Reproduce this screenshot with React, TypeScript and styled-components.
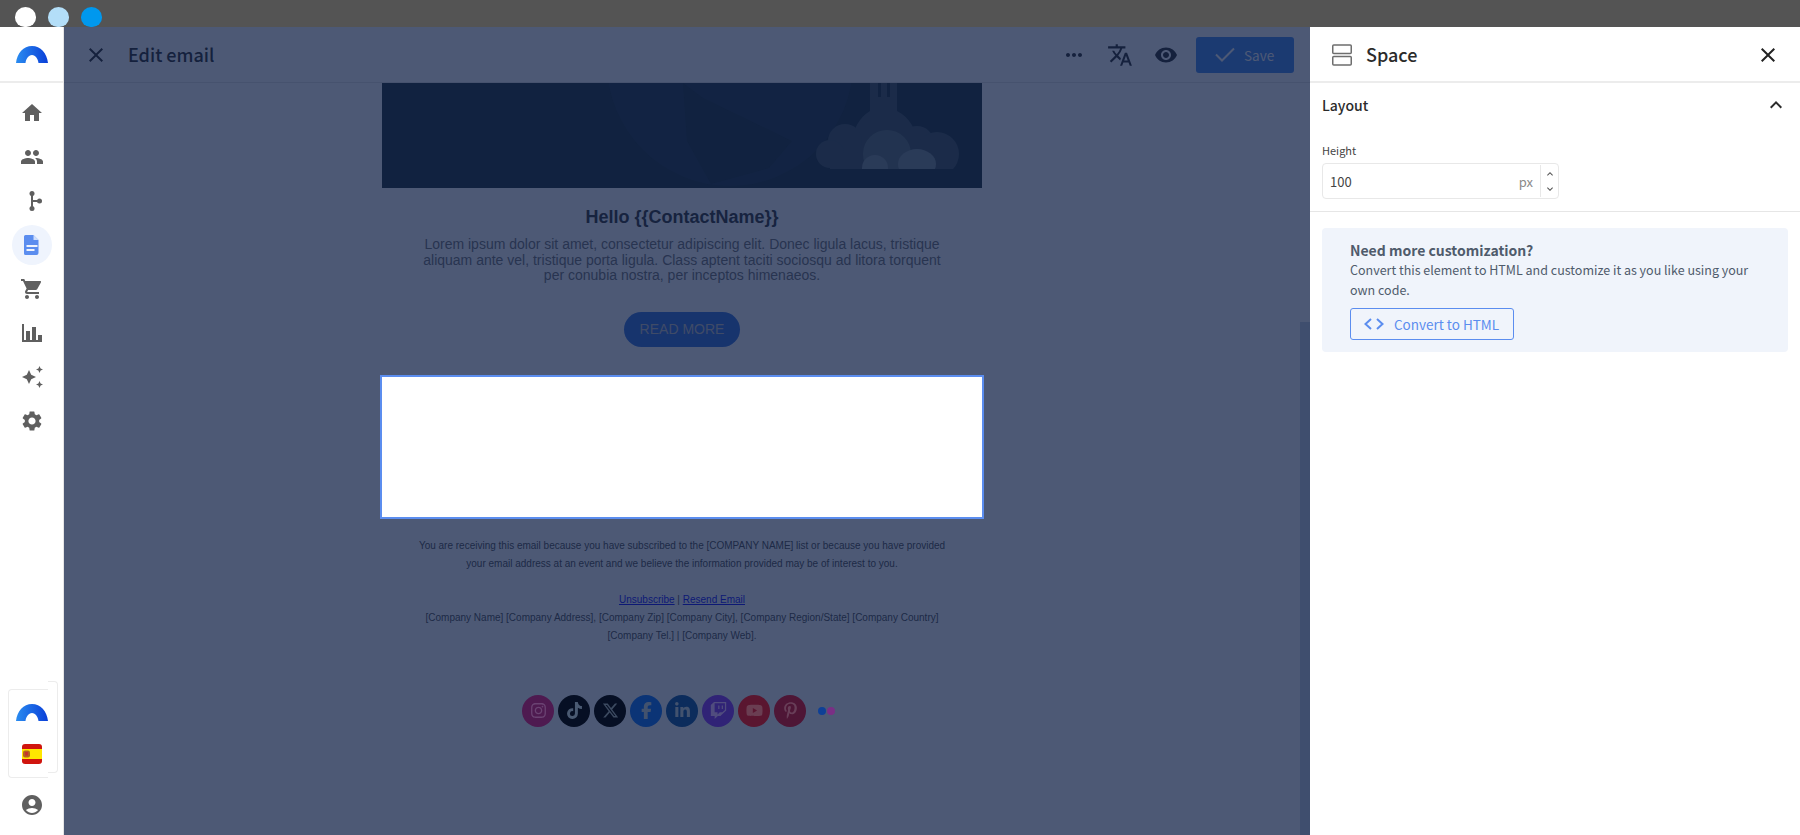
import * as React from 'react';
import styled, { createGlobalStyle } from 'styled-components';
import {
  FaFacebookF,
  FaInstagram,
  FaLinkedinIn,
  FaPinterestP,
  FaTiktok,
  FaTwitch,
  FaXTwitter,
  FaYoutube,
} from 'react-icons/fa6';
import {
  MdAccountCircle,
  MdClose,
  MdExpandLess,
  MdExpandMore,
  MdHome,
  MdMoreHoriz,
  MdPeople,
  MdRemoveRedEye,
  MdSettings,
  MdShoppingCart,
  MdTranslate,
} from 'react-icons/md';

const UI_FONT = '"Noto Sans CJK JP", "Noto Sans", sans-serif';
const MAIL_FONT = '"Liberation Sans", Arial, sans-serif';

const GlobalStyle = createGlobalStyle`
  html, body {
    margin: 0;
    height: 100%;
    overflow: hidden;
    font-family: ${UI_FONT};
  }
  #root {
    height: 100%;
  }
  * {
    box-sizing: border-box;
  }
`;

const S = {
  Page: styled.div`
    width: 1800px;
    height: 835px;
    display: flex;
    flex-direction: column;
    background: #fff;
  `,
  WindowBar: styled.div`
    flex: 0 0 27px;
    background: #545454;
    display: flex;
    align-items: flex-end;
    gap: 12px;
    padding-left: 15px;
  `,
  WindowDot: styled.span<{ color: string }>`
    width: 21px;
    height: 20px;
    border-radius: 50% 50% 46% 46%;
    background: ${({ color }) => color};
  `,
  Body: styled.div`
    flex: 1;
    min-height: 0;
    display: flex;
  `,

  Sidebar: styled.nav`
    flex: 0 0 64px;
    display: flex;
    flex-direction: column;
    align-items: center;
    border-right: solid 1px #e6e6e6;
  `,
  LogoCell: styled.div`
    flex: 0 0 56px;
    width: 100%;
    display: flex;
    align-items: center;
    justify-content: center;
    border-bottom: solid 2px #ececec;
  `,
  NavList: styled.div`
    display: flex;
    flex-direction: column;
    align-items: center;
    padding-top: 10px;
  `,
  NavItem: styled.div<{ active?: boolean }>`
    width: 40px;
    height: 40px;
    margin: 0 0 4px;
    border-radius: 50%;
    display: flex;
    align-items: center;
    justify-content: center;
    font-size: 24px;
    color: ${({ active }) => (active ? '#5b8def' : '#5f5f5f')};
    background: ${({ active }) => (active ? '#eff4fd' : 'transparent')};
  `,
  SidebarFooter: styled.div`
    margin-top: auto;
    align-self: flex-start;
    display: flex;
    flex-direction: column;
    align-items: flex-start;
    padding: 0 0 18px 8px;
  `,
  AccountSwitch: styled.div`
    position: relative;
    width: 40px;
    height: 89px;
    border: solid 1px #ececec;
    border-right: none;
    border-radius: 4px 0 0 4px;
    display: flex;
    flex-direction: column;
    align-items: flex-start;
    padding: 14px 0 0 7px;
    gap: 23px;

    &::after {
      content: '';
      position: absolute;
      left: 100%;
      top: -9px;
      width: 9px;
      height: 90px;
      border: solid 1px #ececec;
      border-left: none;
      border-radius: 0 4px 4px 0;
    }
  `,
  FlagSlot: styled.div`
    margin-left: 6px;
    height: 20px;
  `,
  ProfileIcon: styled.div`
    margin: 15px 0 0 12px;
    height: 24px;
    font-size: 24px;
    line-height: 24px;
    color: #5f5f5f;
  `,

  Main: styled.main`
    position: relative;
    flex: 1;
    min-width: 0;
    display: flex;
    flex-direction: column;
    background: #fff;
  `,
  Overlay: styled.div`
    position: absolute;
    inset: 0;
    z-index: 1;
    background: rgba(17, 34, 71, 0.75);
  `,
  Header: styled.header`
    flex: 0 0 56px;
    display: flex;
    align-items: center;
    padding: 0 16px 0 20px;
    border-bottom: solid 1px #e4e4e4;
    color: #222;
  `,
  HeaderClose: styled.span`
    display: flex;
    font-size: 24px;
    margin-right: 20px;
  `,
  Title: styled.div`
    flex: 1;
    padding-bottom: 2px;
    font-size: 18px;
    font-weight: 500;
  `,
  HeaderActions: styled.div`
    display: flex;
    align-items: center;
    gap: 22px;
    margin-right: 18px;
  `,
  HeaderIcon: styled.span<{ size?: number }>`
    width: 24px;
    display: flex;
    justify-content: center;
    font-size: ${({ size }) => size || 24}px;

    svg {
      flex: none;
    }
  `,
  SaveButton: styled.div`
    width: 98px;
    height: 36px;
    border-radius: 3px;
    background: #3a82ee;
    color: #fff;
    display: flex;
    align-items: center;
    padding-left: 19px;
    gap: 9px;
    font-size: 13.5px;
  `,

  Canvas: styled.div`
    flex: 1;
    min-height: 0;
    display: flex;
    justify-content: center;
    padding-right: 10px;
  `,
  Email: styled.div`
    width: 600px;
    font-family: ${MAIL_FONT};
    text-align: center;
    color: #333;
  `,
  Banner: styled.div`
    height: 105px;
    overflow: hidden;
    display: flex;
  `,
  Hello: styled.h1`
    margin: 17px 0 0;
    font-size: 18px;
    line-height: 24px;
    font-weight: 700;
    color: #2a2a2a;
  `,
  Lorem: styled.p`
    margin: 8px auto 0;
    width: 530px;
    font-size: 14px;
    line-height: 15.5px;
    color: #6d6d6d;
  `,
  ReadMore: styled.div`
    margin: 28px auto 0;
    width: 116px;
    height: 35px;
    border-radius: 18px;
    background: #2a6be0;
    color: #c6c6c6;
    font-size: 14px;
    line-height: 35px;
  `,
  SpaceBlock: styled.div`
    position: relative;
    z-index: 2;
    margin: 28px -2px 0;
    height: 144px;
    background: #fff;
    border: solid 2px #5b8def;
  `,
  Legal: styled.p`
    margin: 18px auto 0;
    width: 530px;
    font-size: 10px;
    line-height: 18px;
    color: #444;
  `,
  LegalLink: styled.a`
    color: #0000ff;
    text-decoration: underline;
  `,
  Socials: styled.div`
    position: relative;
    z-index: 2;
    margin-top: 50px;
    display: flex;
    justify-content: center;
    align-items: center;
    gap: 4px;
  `,
  Social: styled.span<{ color: string; glyph: string }>`
    width: 32px;
    height: 32px;
    border-radius: 50%;
    background: ${({ color }) => color};
    color: ${({ glyph }) => glyph};
    font-size: 17px;
    display: flex;
    align-items: center;
    justify-content: center;
  `,
  Flickr: styled.span`
    width: 32px;
    display: flex;
    justify-content: center;
    gap: 1px;
  `,
  FlickrDot: styled.i<{ color: string }>`
    width: 8px;
    height: 8px;
    border-radius: 50%;
    background: ${({ color }) => color};
  `,
  Scrollbar: styled.div`
    position: absolute;
    right: 0;
    top: 295px;
    bottom: 0;
    width: 10px;
    background: #c5d2e4;
  `,

  Panel: styled.aside`
    flex: 0 0 490px;
    display: flex;
    flex-direction: column;
    background: #fff;
    color: #2b2b2b;
  `,
  PanelHeader: styled.div`
    flex: 0 0 56px;
    display: flex;
    align-items: center;
    padding: 2px 20px 0 22px;
    border-bottom: solid 2px #ececec;
  `,
  PanelGlyph: styled.svg`
    width: 20px;
    height: 22px;
    margin-right: 14px;
  `,
  PanelTitle: styled.div`
    flex: 1;
    padding-bottom: 2px;
    font-size: 18px;
    font-weight: 500;
  `,
  PanelClose: styled.span`
    display: flex;
    font-size: 24px;
    color: #222;
  `,
  Section: styled.section`
    padding: 0 12px 12px;
    border-bottom: solid 1px #e6e6e6;
  `,
  SectionHead: styled.div`
    height: 44px;
    display: flex;
    align-items: center;
    justify-content: space-between;
    font-size: 14px;
    font-weight: 500;
    color: #2b2b2b;
  `,
  SectionToggle: styled.span`
    display: flex;
    font-size: 24px;
  `,
  FieldLabel: styled.div`
    margin-top: 14px;
    font-size: 11px;
    line-height: 18px;
    color: #444;
  `,
  NumberField: styled.div`
    margin-top: 4px;
    width: 237px;
    height: 36px;
    border: solid 1px #e8e8e8;
    border-radius: 4px;
    display: flex;
    align-items: center;
    font-size: 13px;
    color: #444;
  `,
  NumberValue: styled.span`
    flex: 1;
    padding-left: 7px;
  `,
  Unit: styled.span`
    color: #8a8a8a;
    margin-right: 7px;
  `,
  Stepper: styled.span`
    width: 18px;
    height: 32px;
    border-left: solid 1px #e8e8e8;
    display: flex;
    flex-direction: column;
    align-items: center;
    justify-content: center;
    font-size: 12px;
    gap: 3px;
    color: #555;
  `,
  Callout: styled.div`
    margin: 16px 12px 0;
    height: 124px;
    border-radius: 4px;
    background: #f0f4fb;
    padding: 12px 28px;
    font-size: 12.5px;
    line-height: 20px;
    color: #4f5b6b;
  `,
  CalloutTitle: styled.div`
    font-size: 14px;
    font-weight: 700;
    line-height: 20px;
  `,
  ConvertButton: styled.div`
    margin-top: 8px;
    width: 164px;
    height: 32px;
    border: solid 1px #5b8def;
    border-radius: 3px;
    display: flex;
    align-items: center;
    padding-left: 13px;
    gap: 10px;
    font-size: 13.5px;
    color: #5b8def;
    white-space: nowrap;
  `,
};

const BrandArc = ({ id }: { id: string }) => (
  <svg width="32" height="17" viewBox="0 0 32 17" style={{ display: 'block' }}>
    <defs>
      <linearGradient id={id} x1="0" x2="1" y1="0" y2="0">
        <stop offset="0" stopColor="#2a8cf0" />
        <stop offset="1" stopColor="#0a3fd8" />
      </linearGradient>
    </defs>
    <path
      d="M0 17C1 7 7.500 0 16 0s15 7 16 17H22.500c-.5-4-3-8-6.500-8s-6 4-6.500 8H0Z"
      fill={`url(#${id})`}
    />
  </svg>
);

const SpainFlag = () => (
  <svg width="20" height="20" viewBox="0 0 20 20" style={{ display: 'block' }}>
    <rect width="20" height="20" rx="3" fill="#d0150e" />
    <rect y="5" width="20" height="10" fill="#ffe700" />
    <rect x="1" y="6.500" width="7" height="7" rx="2" fill="#b5651d" />
    <rect x="3" y="8" width="3" height="3.500" fill="#c8342c" />
  </svg>
);

const FlowIcon = () => (
  <svg width="24" height="24" viewBox="0 0 24 24" fill="currentColor">
    <circle cx="12" cy="4.500" r="2.500" />
    <circle cx="12" cy="19.500" r="2.500" />
    <circle cx="19.500" cy="12" r="2.500" />
    <rect x="11" y="4.500" width="2" height="15" />
    <rect x="12" y="11" width="7" height="2" />
  </svg>
);

const DocIcon = () => (
  <svg width="24" height="24" viewBox="0 0 24 24">
    <path
      d="M5.500 2h8l5 5v13a2 2 0 0 1-2 2h-11a1.500 1.500 0 0 1-1.500-1.500V3.500A1.500 1.500 0 0 1 5.500 2Z"
      fill="currentColor"
    />
    <path d="M13.500 2v5h5Z" fill="#cfdefb" />
    <rect x="6.500" y="12" width="11" height="2" fill="#eff4fd" />
    <rect x="6.500" y="16" width="8" height="2" fill="#eff4fd" />
  </svg>
);

const StatsIcon = () => (
  <svg width="24" height="24" viewBox="0 0 24 24" fill="currentColor">
    <rect x="2" y="3" width="2" height="18" />
    <rect x="6" y="10" width="4" height="10" />
    <rect x="12" y="6" width="4" height="14" />
    <rect x="18" y="14" width="4" height="6" />
    <rect x="2" y="19" width="20" height="2" />
  </svg>
);

const SparkIcon = () => (
  <svg width="24" height="24" viewBox="0 0 24 24" fill="currentColor">
    <path d="M9 5l2.200 4.800L16 12l-4.800 2.200L9 19l-2.200-4.800L2 12l4.800-2.200Z" />
    <path d="M19.500 1l1.100 2.400 2.400 1.100-2.400 1.100L19.500 8l-1.100-2.400L16 4.500l2.400-1.100Z" />
    <path d="M19.500 16l1.100 2.400 2.400 1.100-2.400 1.100-1.100 2.400-1.100-2.400-2.400-1.100 2.400-1.100Z" />
  </svg>
);

const CodeIcon = () => (
  <svg width="20" height="12" viewBox="0 0 20 12" fill="none" stroke="currentColor" strokeWidth="2">
    <path d="M7 1 1.500 6 7 11" />
    <path d="M13 1l5.500 5L13 11" />
  </svg>
);

const Rocket = () => (
  <svg width="600" height="105" viewBox="0 0 600 105">
    <defs>
      <clipPath id="smoke-clip">
        <rect width="600" height="86" />
      </clipPath>
    </defs>
    <rect width="600" height="105" fill="#10242c" />
    <circle cx="348" cy="-20" r="123" fill="#162b38" />
    <path d="M301 0l20 15 89 43-23 27-58 16-24-43Z" fill="#10242c" />
    <g clipPath="url(#smoke-clip)">
      <path d="M488 0h27v28c12 6 20 18 20 34v24h-65V62c0-16 8-28 18-34Z" fill="#384a50" />
      <circle cx="463" cy="58" r="17" fill="#384a50" />
      <circle cx="448" cy="71" r="14" fill="#384a50" />
      <rect x="448" y="70" width="120" height="16" fill="#384a50" />
      <circle cx="535" cy="60" r="17" fill="#384a50" />
      <circle cx="555" cy="71" r="22" fill="#384a50" />
      <circle cx="505" cy="71" r="24" fill="#556a6c" />
      <circle cx="493" cy="85" r="13" fill="#75868c" />
      <ellipse cx="535" cy="81" rx="19" ry="15" fill="#75868c" />
    </g>
    <path d="M496 0h3v14h-3ZM505 0h3v14h-3Z" fill="#10242c" />
  </svg>
);

const navItems = [
  { key: 'home', icon: <MdHome /> },
  { key: 'contacts', icon: <MdPeople /> },
  { key: 'flows', icon: <FlowIcon /> },
  { key: 'docs', icon: <DocIcon />, active: true },
  { key: 'cart', icon: <MdShoppingCart /> },
  { key: 'stats', icon: <StatsIcon /> },
  { key: 'ai', icon: <SparkIcon /> },
  { key: 'settings', icon: <MdSettings /> },
];

// the row sits above the dim layer, so these are the already dimmed colours
const socials = [
  { key: 'instagram', color: '#4e1a50', glyph: '#6a4272', icon: <FaInstagram /> },
  { key: 'tiktok', color: '#060f24', glyph: '#4a5a72', icon: <FaTiktok /> },
  { key: 'x', color: '#060f24', glyph: '#3c4a60', icon: <FaXTwitter /> },
  { key: 'facebook', color: '#0b3476', glyph: '#42526e', icon: <FaFacebookF /> },
  { key: 'linkedin', color: '#0c2c5c', glyph: '#42526e', icon: <FaLinkedinIn /> },
  { key: 'twitch', color: '#302376', glyph: '#504c7e', icon: <FaTwitch /> },
  { key: 'youtube', color: '#5a1630', glyph: '#6a3e52', icon: <FaYoutube /> },
  { key: 'pinterest', color: '#4e1636', glyph: '#683e58', icon: <FaPinterestP /> },
];

const App = () => (
  <S.Page>
    <GlobalStyle />
    <S.WindowBar>
      <S.WindowDot color="#ffffff" />
      <S.WindowDot color="#b3def8" />
      <S.WindowDot color="#0098ee" />
    </S.WindowBar>
    <S.Body>
      <S.Sidebar>
        <S.LogoCell>
          <BrandArc id="brand-top" />
        </S.LogoCell>
        <S.NavList>
          {navItems.map((item) => (
            <S.NavItem key={item.key} active={item.active}>
              {item.icon}
            </S.NavItem>
          ))}
        </S.NavList>
        <S.SidebarFooter>
          <S.AccountSwitch>
            <BrandArc id="brand-bottom" />
            <S.FlagSlot>
              <SpainFlag />
            </S.FlagSlot>
          </S.AccountSwitch>
          <S.ProfileIcon>
            <MdAccountCircle />
          </S.ProfileIcon>
        </S.SidebarFooter>
      </S.Sidebar>

      <S.Main>
        <S.Header>
          <S.HeaderClose>
            <MdClose />
          </S.HeaderClose>
          <S.Title>Edit email</S.Title>
          <S.HeaderActions>
            <S.HeaderIcon>
              <MdMoreHoriz />
            </S.HeaderIcon>
            <S.HeaderIcon size={26}>
              <MdTranslate />
            </S.HeaderIcon>
            <S.HeaderIcon>
              <MdRemoveRedEye />
            </S.HeaderIcon>
          </S.HeaderActions>
          <S.SaveButton>
            <svg width="20" height="15" viewBox="0 0 20 15" fill="none">
              <path d="M1 7.500l6 6L19 1.500" stroke="currentColor" strokeWidth="2" />
            </svg>
            Save
          </S.SaveButton>
        </S.Header>
        <S.Canvas>
          <S.Email>
            <S.Banner>
              <Rocket />
            </S.Banner>
            <S.Hello>Hello {'{{ContactName}}'}</S.Hello>
            <S.Lorem>
              Lorem ipsum dolor sit amet, consectetur adipiscing elit. Donec ligula
              lacus, tristique aliquam ante vel, tristique porta ligula. Class aptent
              taciti sociosqu ad litora torquent per conubia nostra, per inceptos
              himenaeos.
            </S.Lorem>
            <S.ReadMore>READ MORE</S.ReadMore>
            <S.SpaceBlock />
            <S.Legal>
              You are receiving this email because you have subscribed to the [COMPANY
              NAME] list or because you have provided your email address at an event and
              we believe the information provided may be of interest to you.
              <br />
              <br />
              <S.LegalLink>Unsubscribe</S.LegalLink> | <S.LegalLink>Resend Email</S.LegalLink>
              <br />
              [Company Name] [Company Address], [Company Zip] [Company City], [Company
              Region/State] [Company Country] [Company Tel.] | [Company Web].
            </S.Legal>
            <S.Socials>
              {socials.map((social) => (
                <S.Social key={social.key} color={social.color} glyph={social.glyph}>
                  {social.icon}
                </S.Social>
              ))}
              <S.Flickr>
                <S.FlickrDot color="#0e4096" />
                <S.FlickrDot color="#7a2f85" />
              </S.Flickr>
            </S.Socials>
          </S.Email>
        </S.Canvas>
        <S.Scrollbar />
        <S.Overlay />
      </S.Main>

      <S.Panel>
        <S.PanelHeader>
          <S.PanelGlyph viewBox="0 0 20 22" fill="none" stroke="#6e6e6e" strokeWidth="1.500">
            <rect x="0.750" y="1" width="18.500" height="8.500" rx="1" />
            <rect x="0.750" y="12.500" width="18.500" height="8.500" rx="1" />
          </S.PanelGlyph>
          <S.PanelTitle>Space</S.PanelTitle>
          <S.PanelClose>
            <MdClose />
          </S.PanelClose>
        </S.PanelHeader>
        <S.Section>
          <S.SectionHead>
            Layout
            <S.SectionToggle>
              <MdExpandLess />
            </S.SectionToggle>
          </S.SectionHead>
          <S.FieldLabel>Height</S.FieldLabel>
          <S.NumberField>
            <S.NumberValue>100</S.NumberValue>
            <S.Unit>px</S.Unit>
            <S.Stepper>
              <MdExpandLess />
              <MdExpandMore />
            </S.Stepper>
          </S.NumberField>
        </S.Section>
        <S.Callout>
          <S.CalloutTitle>Need more customization?</S.CalloutTitle>
          Convert this element to HTML and customize it as you like using your own code.
          <S.ConvertButton>
            <CodeIcon />
            Convert to HTML
          </S.ConvertButton>
        </S.Callout>
      </S.Panel>
    </S.Body>
  </S.Page>
);

export default App;
